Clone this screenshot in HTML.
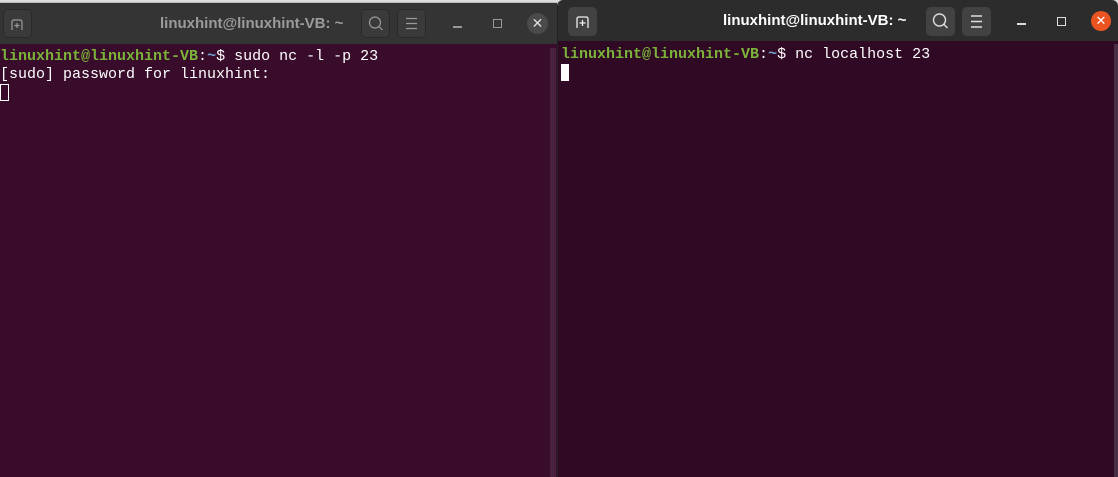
<!DOCTYPE html>
<html><head><meta charset="utf-8"><style>
*{margin:0;padding:0;box-sizing:border-box}
body{width:1118px;height:477px;background:#ddd;position:relative;overflow:hidden;font-family:"Liberation Sans",sans-serif}
.win{position:absolute;bottom:0;overflow:hidden}
.tb{position:absolute;left:0;right:0;top:0}
.term{position:absolute;left:0;right:0;bottom:0;font-family:"Liberation Mono",monospace;font-size:15px;line-height:18px;white-space:pre;color:#ffffff}
.g{color:#7bb33a;font-weight:bold}
.b{color:#729fcf;font-weight:bold}
.btn{position:absolute;width:29px;height:29px;border-radius:5px}
.title{position:absolute;top:12px;font-size:15px;font-weight:bold}
</style></head><body>
<div class="win" style="left:0;width:557px;top:2px;border-top:1px solid #bbb">
 <div class="tb" style="height:41px;background:#343434">
  <div class="btn" style="left:3px;top:6px;background:#3a3a3a;border:1px solid #2a2a2a"><svg width="27" height="27"><path d="M8 20V12Q8 10 10 10H16Q18 10 18 12V20M13 13V18M10.5 15.5H15.5" stroke="#9a9a9a" stroke-width="1.2" fill="none"/></svg></div>
  <div class="title" style="left:160px;color:#9b9b9b">linuxhint@linuxhint-VB: ~</div>
  <div class="btn" style="left:361px;top:6px;background:#3a3a3a;border:1px solid #2a2a2a"><svg width="27" height="27"><circle cx="13" cy="12.5" r="5.5" stroke="#999" stroke-width="1.2" fill="none"/><path d="M17 16.5L20.5 20" stroke="#999" stroke-width="1.2"/></svg></div>
  <div class="btn" style="left:397px;top:6px;background:#3a3a3a;border:1px solid #2a2a2a"><svg width="27" height="27"><path d="M8 8.5H19M8 13.5H19M8 18.5H19" stroke="#999" stroke-width="1.2"/></svg></div>
  <div style="position:absolute;left:453px;top:23px;width:9px;height:1.5px;background:#999"></div>
  <div style="position:absolute;left:493px;top:16px;width:9px;height:9px;border:1.3px solid #999"></div>
  <div style="position:absolute;left:527px;top:10px;width:21px;height:21px;border-radius:50%;background:#4a4a4a;color:#ddd;font-size:14px;text-align:center;line-height:21px">✕</div>
 </div>
 <div class="term" style="background:#380c2a;top:41px;padding-top:4px"><span class="g">linuxhint@linuxhint-VB</span>:<span class="b">~</span>$ sudo nc -l -p 23
[sudo] password for linuxhint:
<span style="display:inline-block;width:9px;height:17px;border:1px solid #fff;vertical-align:top"></span></div>
 <div style="position:absolute;left:550px;top:45px;width:6px;bottom:0;background:#4a2040"></div>
</div>
<div class="win" style="left:557px;right:0;top:0;border-left:1px solid #222;border-radius:6px 6px 0 0">
 <div class="tb" style="height:41px;background:#2c2c2c">
  <div class="btn" style="left:10px;top:7px;background:#424242"><svg width="29" height="29"><path d="M9 21V12Q9 10 11 10H18Q20 10 20 12V21M14.5 13V19M11.5 16H17.5" stroke="#eee" stroke-width="1.3" fill="none"/></svg></div>
  <div class="title" style="left:165px;color:#ffffff">linuxhint@linuxhint-VB: ~</div>
  <div class="btn" style="left:368px;top:7px;background:#424242"><svg width="29" height="29"><circle cx="13.5" cy="13" r="6" stroke="#ddd" stroke-width="1.4" fill="none"/><path d="M18 17.5L21.5 21" stroke="#ddd" stroke-width="1.4"/></svg></div>
  <div class="btn" style="left:404px;top:7px;background:#424242"><svg width="29" height="29"><path d="M9 9H20M9 14.5H20M9 20H20" stroke="#ddd" stroke-width="1.4"/></svg></div>
  <div style="position:absolute;left:459px;top:23px;width:9px;height:1.5px;background:#ddd"></div>
  <div style="position:absolute;left:499px;top:17px;width:9px;height:9px;border:1.5px solid #ddd"></div>
  <div style="position:absolute;left:533px;top:11px;width:20px;height:20px;border-radius:50%;background:#e95420;color:#fff;font-size:13px;text-align:center;line-height:20px">✕</div>
 </div>
 <div class="term" style="background:#300a24;top:41px;padding-top:5px;padding-left:3px"><span class="g">linuxhint@linuxhint-VB</span>:<span class="b">~</span>$ nc localhost 23
<span style="display:inline-block;width:8px;height:17px;background:#fff;vertical-align:top"></span></div>
 <div style="position:absolute;right:0;top:44px;width:4px;bottom:0;background:#4a3044"></div>
</div>
</body></html>
